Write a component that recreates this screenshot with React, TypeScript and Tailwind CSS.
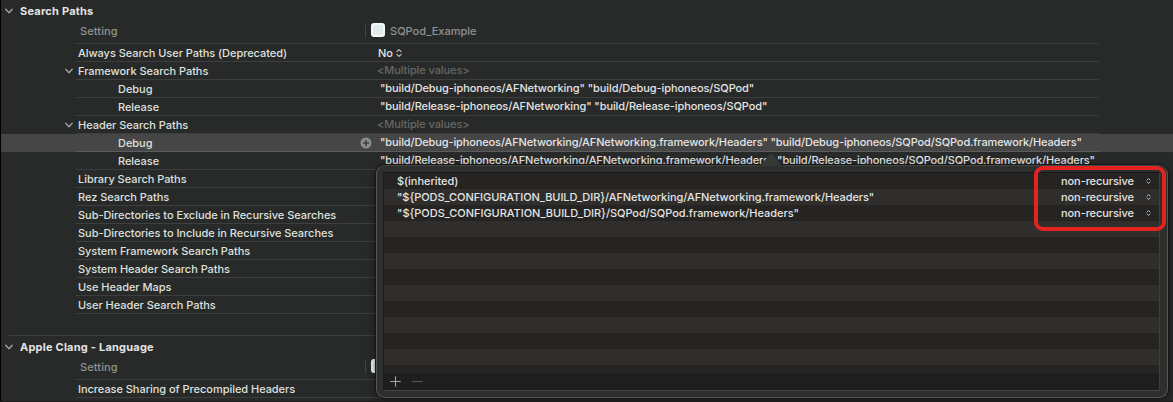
import React from "react";

type Kind = "plain" | "parent" | "child";
interface Setting {
  name: string;
  kind: Kind;
  value?: string;
  tone?: "multiple" | "popup" | "text";
  selected?: boolean;
}

const searchPaths: Setting[] = [
  { name: "Always Search User Paths (Deprecated)", kind: "plain", value: "No", tone: "popup" },
  { name: "Framework Search Paths", kind: "parent", value: "<Multiple values>", tone: "multiple" },
  { name: "Debug", kind: "child", value: '"build/Debug-iphoneos/AFNetworking" "build/Debug-iphoneos/SQPod"', tone: "text" },
  { name: "Release", kind: "child", value: '"build/Release-iphoneos/AFNetworking" "build/Release-iphoneos/SQPod"', tone: "text" },
  { name: "Header Search Paths", kind: "parent", value: "<Multiple values>", tone: "multiple" },
  { name: "Debug", kind: "child", value: '"build/Debug-iphoneos/AFNetworking/AFNetworking.framework/Headers" "build/Debug-iphoneos/SQPod/SQPod.framework/Headers"', tone: "text", selected: true },
  { name: "Release", kind: "child", value: '"build/Release-iphoneos/AFNetworking/AFNetworking.framework/Headers" "build/Release-iphoneos/SQPod/SQPod.framework/Headers"', tone: "text" },
  { name: "Library Search Paths", kind: "plain" },
  { name: "Rez Search Paths", kind: "plain" },
  { name: "Sub-Directories to Exclude in Recursive Searches", kind: "plain" },
  { name: "Sub-Directories to Include in Recursive Searches", kind: "plain" },
  { name: "System Framework Search Paths", kind: "plain" },
  { name: "System Header Search Paths", kind: "plain" },
  { name: "Use Header Maps", kind: "plain" },
  { name: "User Header Search Paths", kind: "plain" },
];

const clangLanguage: Setting[] = [
  { name: "Increase Sharing of Precompiled Headers", kind: "plain" },
];

const paths = [
  "$(inherited)",
  '"${PODS_CONFIGURATION_BUILD_DIR}/AFNetworking/AFNetworking.framework/Headers"',
  '"${PODS_CONFIGURATION_BUILD_DIR}/SQPod/SQPod.framework/Headers"',
];

function Chevron() {
  return (
    <svg width="8" height="6" viewBox="0 0 8 6" className="shrink-0" fill="none" stroke="#a4a5a5" strokeWidth="1.3" strokeLinecap="round" strokeLinejoin="round">
      <path d="M0.8 1.2 4 4.7 7.2 1.2" />
    </svg>
  );
}

function Stepper() {
  return (
    <svg width="6" height="8" viewBox="0 0 6 8" className="shrink-0" fill="none" stroke="#c4c4c3" strokeWidth="1.1" strokeLinecap="round" strokeLinejoin="round">
      <path d="M0.9 2.7 3 0.7 5.1 2.7M0.9 5.3 3 7.3 5.1 5.3" />
    </svg>
  );
}

function SmallStepper() {
  return (
    <svg width="5" height="6" viewBox="0 0 5 6" className="shrink-0" fill="none" stroke="#bdbdbc" strokeWidth="1" strokeLinecap="round" strokeLinejoin="round">
      <path d="M1 2 2.5 0.6 4 2M1 4 2.5 5.4 4 4" />
    </svg>
  );
}

function AppIcon() {
  return (
    <svg width="14" height="14" viewBox="0 0 14 14" className="shrink-0">
      <rect width="14" height="14" rx="3" fill="#f4f8f9" />
      <rect x="2" y="2" width="10" height="10" rx="2" fill="#e0e9eb" />
      <path d="M2 5H12M2 9H12M5 2V12M9 2V12" stroke="#e9f0f1" strokeWidth="0.7" />
      <circle cx="7" cy="7" r="2.4" fill="none" stroke="#d5e1e5" strokeWidth="0.7" />
    </svg>
  );
}

function SettingRow({ row }: { row: Setting }) {
  return (
    <div className={row.selected ? "flex h-[18px] bg-[#464646]" : "flex h-[18px]"}>
      <div className="flex w-[76px] shrink-0 items-center justify-end pr-[3px]">
        {row.kind === "parent" && <Chevron />}
      </div>
      <div className={row.selected ? "flex w-[1023px] items-center border-b border-[#5c5c5c]" : "flex w-[1023px] items-center border-b border-[#3d3f3e]"}>
        <div className={row.kind === "child" ? "w-[283px] shrink-0 pl-[42px] text-[#dfe0df]" : "w-[283px] shrink-0 pl-[2px] text-[#dfe0df]"}>
          {row.name}
        </div>
        <div className="flex w-[21px] shrink-0 items-center">
          {row.selected && (
            <svg width="12" height="12" viewBox="0 0 12 12" className="ml-px">
              <circle cx="6" cy="6" r="5.5" fill="#8c8c8c" />
              <path d="M6 3V9M3 6H9" stroke="#3f3f3f" strokeWidth="1.6" />
            </svg>
          )}
        </div>
        {row.tone === "multiple" && <span className="-mt-[2px] -ml-[3px] tracking-[-0.09px] text-[#656766]">{row.value}</span>}
        {row.tone === "popup" && (
          <span className="-ml-[2px] flex items-center gap-[3px] text-[#e4e4e4]">
            {row.value}
            <Stepper />
          </span>
        )}
        {row.tone === "text" && (
          <span className={row.value && row.value.length > 80 ? "-mt-[2px] tracking-[-0.123px] text-[#e4e4e4]" : "-mt-[2px] tracking-[-0.09px] text-[#e4e4e4]"}>
            {row.value}
          </span>
        )}
      </div>
    </div>
  );
}

function Section({ title, rows }: { title: string; rows: Setting[] }) {
  return (
    <section>
      <h2 className="flex h-[22px] items-center gap-[7px] pl-[5px] text-[11px] font-bold tracking-[0.22px] text-[#e3e4e3]">
        <Chevron />
        {title}
      </h2>
      <div className="ml-[76px] flex h-[22px] w-[1023px] border-b border-[#3d3f3e] text-[#919392]">
        <div className="w-[289px] shrink-0 pt-[1px] pl-[4px] tracking-[0.1px]">Setting</div>
        <div className="mt-[2px] flex h-[14px] items-center gap-[5px] border-l border-[#414342] pl-[5px]">
          <div className="-mt-[2px]"><AppIcon /></div>
          <span className="tracking-[0.02px]">SQPod_Example</span>
        </div>
      </div>
      {rows.map((row, i) => (
        <SettingRow key={i} row={row} />
      ))}
    </section>
  );
}

function PathsPopover() {
  return (
    <div className="absolute top-[164px] left-[375px] h-[235px] w-[794px] rounded-[10px] border border-[#151615] bg-[#2d2f2c] shadow-[0_2px_9px_rgba(0,0,0,0.45)]">
      <div className="h-full rounded-[9px] border border-[#565855] border-t-[#444643] pt-[6px] pr-[7px] pl-[6px]">
        <div className="h-[219px] border border-t-[#181918] border-r-[#3d3f3d] border-b-[#454745] border-l-[#1b1c1b] bg-[#1e1e1e]">
          <div className="h-[200px] overflow-hidden">
            {Array.from({ length: 13 }, (_, i) => (
              <div key={i} className={i % 2 ? "flex h-[16px] items-center bg-[#2f2e2d] pl-[13px] text-[#e4e4e3]" : "flex h-[16px] items-center bg-[#252423] pl-[13px] text-[#e4e4e3]"}>
                {paths[i] && (
                  <>
                    <span className={i === 1 ? "w-[664px] shrink-0 tracking-[-0.07px]" : "w-[664px] shrink-0 tracking-[-0.04px]"}>{paths[i]}</span>
                    <span className="w-[85px] shrink-0 tracking-[-0.08px]">non-recursive</span>
                    <SmallStepper />
                  </>
                )}
              </div>
            ))}
          </div>
          <div className="flex h-[17px] items-center gap-[11px] pl-[6px]">
            <svg width="11" height="11" viewBox="0 0 11 11" stroke="#a4a4a4" strokeWidth="1.1"><path d="M5.5 0.3V10.7M0.3 5.5H10.7" /></svg>
            <svg width="11" height="11" viewBox="0 0 11 11" stroke="#575757" strokeWidth="1.2"><path d="M0.3 5.5H10.7" /></svg>
          </div>
        </div>
      </div>
      <svg width="28" height="14" viewBox="0 0 28 14" className="absolute -top-[13px] left-[381px]">
        <path d="M1 14V13C4.5 13 5.5 11 7.5 8.5L12.8 1.8Q14 0.6 15.2 1.8L20.5 8.5C22.5 11 23.5 13 27 13V14Z" fill="#353834" />
      </svg>
    </div>
  );
}

export default function App() {
  return (
    <main className="relative h-[402px] w-[1173px] overflow-hidden border-b border-[#1b1c1b] bg-[#282a29] font-['Inter',sans-serif] text-[11px] leading-[16px] font-medium tracking-[-0.04px] whitespace-pre">
      <Section title="Search Paths" rows={searchPaths} />
      <div className="mt-[21px] ml-[9px] h-px w-[1090px] bg-[#3d3f3e]" />
      <Section title="Apple Clang - Language" rows={clangLanguage} />
      <div className="absolute inset-y-0 left-0 w-px bg-black" />
      <PathsPopover />
      <div className="absolute top-[166px] left-[1034px] h-[65px] w-[132px] rounded-[9px] border-4 border-[#e32222]" />
    </main>
  );
}
